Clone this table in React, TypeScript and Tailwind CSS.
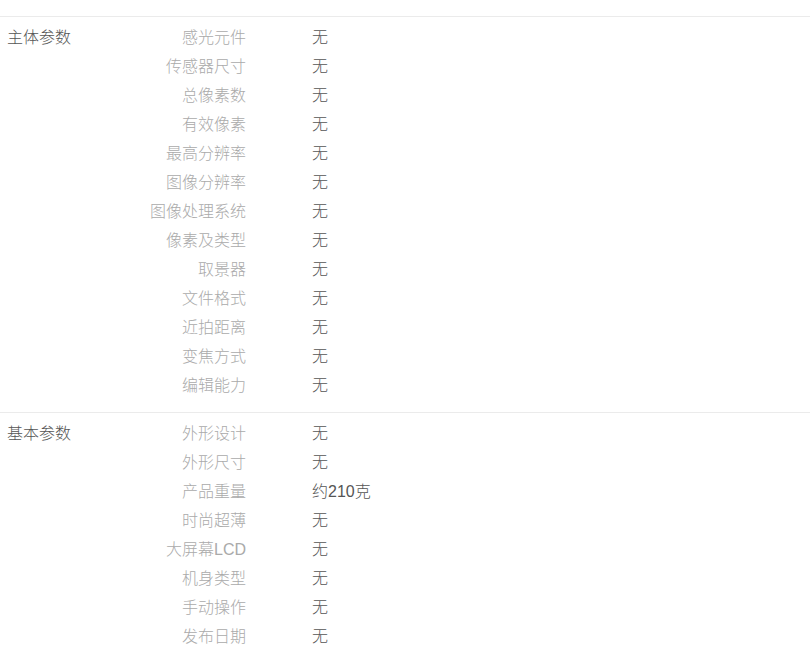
import React from 'react';

interface ParamGroup {
  title: string;
  items: [string, string][];
}

const groups: ParamGroup[] = [
  {
    title: '主体参数',
    items: [
      ['感光元件', '无'],
      ['传感器尺寸', '无'],
      ['总像素数', '无'],
      ['有效像素', '无'],
      ['最高分辨率', '无'],
      ['图像分辨率', '无'],
      ['图像处理系统', '无'],
      ['像素及类型', '无'],
      ['取景器', '无'],
      ['文件格式', '无'],
      ['近拍距离', '无'],
      ['变焦方式', '无'],
      ['编辑能力', '无'],
    ],
  },
  {
    title: '基本参数',
    items: [
      ['外形设计', '无'],
      ['外形尺寸', '无'],
      ['产品重量', '约210克'],
      ['时尚超薄', '无'],
      ['大屏幕LCD', '无'],
      ['机身类型', '无'],
      ['手动操作', '无'],
      ['发布日期', '无'],
    ],
  },
];

export default function App() {
  return (
    <div
      className="w-[810px] h-[646px] overflow-hidden bg-white text-[16px] font-light"
      style={{ fontFamily: '"Liberation Sans", "Noto Sans CJK SC", sans-serif' }}
    >
      <div className="h-[16px]" />
      {groups.map((group) => (
        // 每个参数分组
        <div key={group.title} className="flex border-t border-[#ebebeb] pt-[6px] pb-[12px]">
          <div className="w-[147px] shrink-0 pl-[7px] leading-[29px] text-[#555]">{group.title}</div>
          <div className="flex flex-col">
            {group.items.map(([key, value]) => (
              <div key={key} className="flex h-[29px] leading-[29px]">
                <span className="w-[99px] text-right text-[#aaa]">{key}</span>
                <span className="ml-[66px] text-[#555]">{value}</span>
              </div>
            ))}
          </div>
        </div>
      ))}
    </div>
  );
}
